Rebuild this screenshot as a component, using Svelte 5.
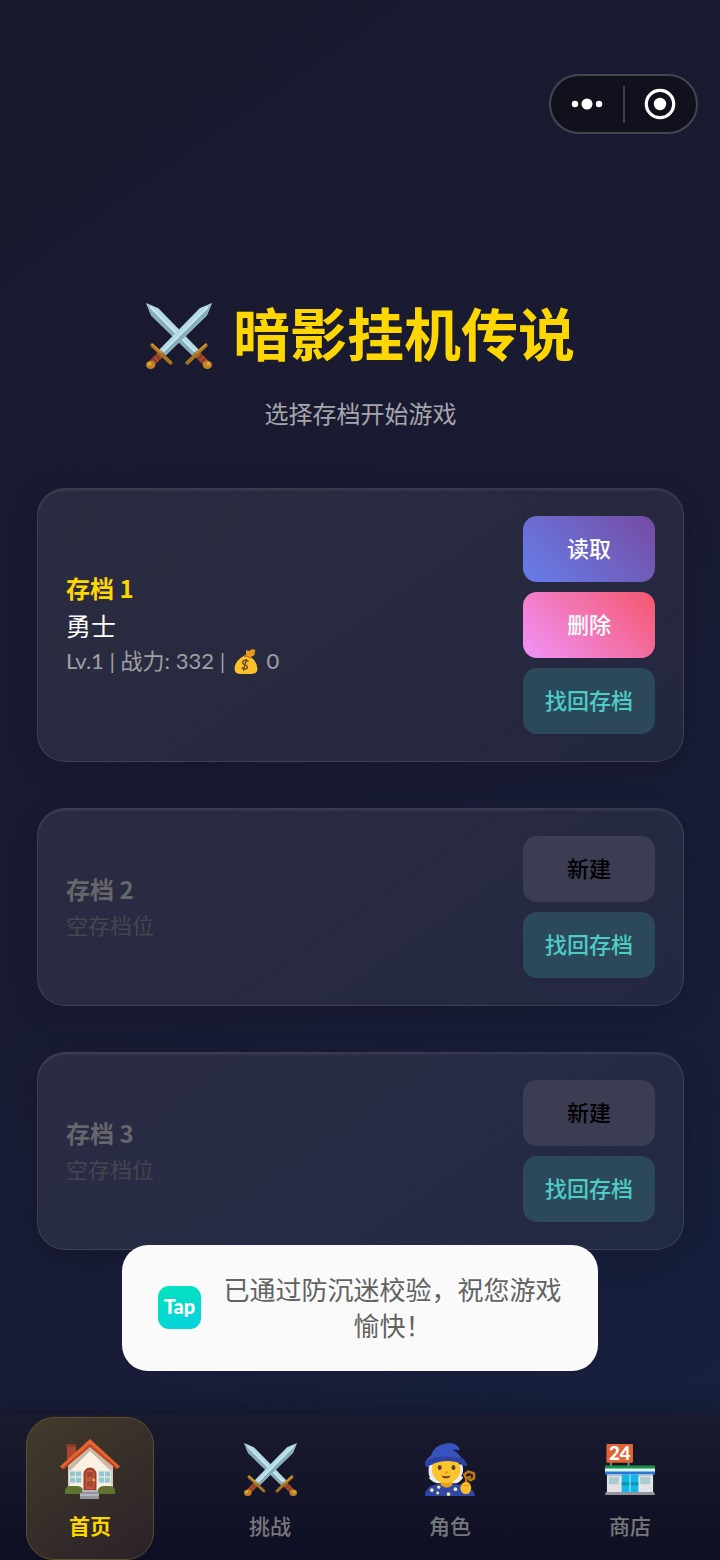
<script lang="ts">
  type Slot = { id: number; name?: string; level?: number; power?: number; gold?: number }
  type Tab = { id: string; label: string }

  const slots: Slot[] = [
    { id: 1, name: '勇士', level: 1, power: 332, gold: 0 },
    { id: 2 },
    { id: 3 },
  ]

  const tabs: Tab[] = [
    { id: 'home', label: '首页' },
    { id: 'battle', label: '挑战' },
    { id: 'role', label: '角色' },
    { id: 'shop', label: '商店' },
  ]

  let activeTab = $state('home')
</script>

{#snippet sword()}
  <path d="M64 0L52 5L13 45L19 51L59 12Z" fill="#b4dae4" />
  <path d="M64 0L16 48L19 51L59 12Z" fill="#86aebb" />
  <path d="M60 4L17 47" stroke="#cfe9f0" stroke-width="1.6" />
  <path d="M15 49L6 58" stroke="#a84a32" stroke-width="6.4" />
  <path d="M9 50l5 5M6 53l5 5" stroke="#74301f" stroke-width="1" />
  <path d="M6 41L24 58" stroke="#a8741b" stroke-width="3.6" stroke-linecap="round" />
  <path d="M6 40L15 48" stroke="#d49c2e" stroke-width="1.6" stroke-linecap="round" />
  <ellipse cx="4.500" cy="60" rx="4.500" ry="4" fill="#c18420" />
  <circle cx="3.500" cy="59" r="1.600" fill="#e8b13c" />
{/snippet}

{#snippet swords()}
  <svg viewBox="0 0 64 64" aria-hidden="true">
    <g transform="translate(64 0) scale(-1 1)">{@render sword()}</g>
    {@render sword()}
  </svg>
{/snippet}

{#snippet house()}
  <svg viewBox="0 0 60 60" aria-hidden="true">
    <path d="M7 6h9v14l-9 6z" fill="#a9472f" />
    <path d="M6 5h10v3H6z" fill="#8b3a28" />
    <path d="M30 5L53 27V54H8V27Z" fill="#f8f1e4" />
    <path d="M30 6L53 28V34L30 12L8 34V28Z" fill="#c9b8a6" />
    <path d="M8 30h2v20H8zM51 30h2v20h-2z" fill="#d9cbbb" />
    <path d="M30 0L60 27.500L57 30L30 7L3 30L0 27.500Z" fill="#e8622f" />
    <path d="M30 5L58 29L56 30L30 8L4 30L2 29Z" fill="#bd4526" />
    <g fill="#92c6d1" stroke="#e9e6dc" stroke-width="1">
      <path d="M9.500 32h6v6h-6zM15.500 32h6v6h-6zM9.500 38h6v6h-6zM15.500 38h6v6h-6z" />
      <path d="M38.500 32h6v6h-6zM44.500 32h6v6h-6zM38.500 38h6v6h-6zM44.500 38h6v6h-6z" />
    </g>
    <path d="M23.500 51V35a6.500 6.500 0 0 1 13 0V51Z" fill="#9d3c28" />
    <path d="M25.500 50V35a4.500 4.500 0 0 1 9 0V50Z" fill="#bf5b40" />
    <path d="M27 33h6v5h-6zM27 42h6v6h-6z" fill="#a5462f" />
    <circle cx="34" cy="41" r="1.300" fill="#f5b82e" />
    <path d="M5 55v-4q1-4 6-4h6q5 0 6 4v4zM38 55v-4q1-4 6-4h5q5 0 6 4v4z" fill="#60742f" />
    <path d="M22 51h16v3h1v6H20v-6h2z" fill="#9494a2" />
    <path d="M22 51h16v2H22zM20 55h19v2H20z" fill="#b5b5c1" />
  </svg>
{/snippet}

{#snippet wizard()}
  <svg viewBox="0 0 52 54" aria-hidden="true">
    <path d="M4 22q-1 10 1 13l-1 1q5 5 9 5h19q4-1 7-6l-2-1q3-5 1-12z" fill="#e9edf3" />
    <path d="M0 54q0-10 12-12h20q17 1 19 12z" fill="#3046a8" />
    <path d="M16 36h12v7q-6 5-12 0z" fill="#e59e20" />
    <ellipse cx="21.500" cy="27" rx="14.500" ry="14" fill="#fcc52e" />
    <ellipse cx="15" cy="25" rx="2" ry="2.600" fill="#593b2c" />
    <ellipse cx="29" cy="25" rx="2" ry="2.600" fill="#593b2c" />
    <ellipse cx="22" cy="30" rx="2.200" ry="1.300" fill="#ee9530" />
    <path d="M17 33q5 1.500 9 0q-1 3-4.500 3t-4.500-3" fill="#693f2d" />
    <path d="M0 21q1-5 6-8Q9 3 19 1q10-3 15 3q2 3 0 4q-3-2-6-1q6 3 9 8q6 4 6 8q-3 1-6-2q-7-4-17-4T4 24q-4 1-4-3" fill="#3853bf" />
    <path d="M3 17q16-6 36-1l4 6q-2 3-6-1q-15-6-33 2q-5 0-4-3z" fill="#2c42a3" />
    <g fill="#e8f093">
      <circle cx="7" cy="48" r="1.900" /><circle cx="14" cy="45" r="1.700" />
      <circle cx="13" cy="51" r="1.500" /><circle cx="31" cy="47" r="1.900" />
      <circle cx="24" cy="52" r="1.900" />
    </g>
    <path d="M42 45v-9l-2-4l4-3l6 2v5l-4 2l-2-3l3-1" fill="none" stroke="#bd7516" stroke-width="2.600" stroke-linejoin="round" />
    <path d="M36 46q0-4 4-6q6-1 7 5q0 7-5 7t-6-6" fill="#fdbd2b" />
    <path d="M38 43q4 1 8 0" fill="none" stroke="#e39b20" stroke-width="1" />
  </svg>
{/snippet}

{#snippet store()}
  <svg viewBox="0 0 52 54" aria-hidden="true">
    <path d="M5 19h2v5H5zM23 19h2v5h-2z" fill="#858b8f" />
    <rect x="1.500" y="1" width="27" height="19" rx="1" fill="#df6532" />
    <text x="15" y="17" text-anchor="middle" class="sign">24</text>
    <path d="M2 30h47v20H2z" fill="#e3e3e7" />
    <path d="M0 23h51v4H0z" fill="#169347" />
    <path d="M0 26h51v4H0z" fill="#dff4f7" />
    <path d="M0 29h51v3H0z" fill="#2b78d2" />
    <path d="M2 32h47v2H2z" fill="#bfc3ce" />
    <path d="M17 32h17v18H17z" fill="#16b5e8" />
    <path d="M17 40h17v3H17z" fill="#0797a4" />
    <path d="M25 32h1v18h-1z" fill="#b5effa" />
    <path d="M4 35h10v7H4zM36 35h10v7H36z" fill="#a9cbd0" />
    <path d="M1 50h49l1 3H0z" fill="#92969a" />
  </svg>
{/snippet}

{#snippet moneyBag()}
  <svg class="bag" viewBox="0 0 22 24" aria-hidden="true">
    <path d="M11 1l3 1l3-2l3 1l-1 5l-4 2l-4-2z" fill="#e69a1e" />
    <path d="M10 6q4-1 6 2q6 5 6 11q0 5-6 5H6q-6 0-6-5Q0 11 10 6" fill="#fcc02d" />
    <path d="M9 7q4-1 7 2" fill="none" stroke="#b87416" stroke-width="1.500" />
    <path d="M13.500 12q-4-2.500-5.500 0q-1 2 2 3t2 3.500q-1.500 1.500-5-.5M11.500 9.500L8.500 21" fill="none" stroke="#694b20" stroke-width="1.400" />
  </svg>
{/snippet}

<div class="page">
  <header class="top">
    <div class="capsule">
      <button type="button" aria-label="更多">
        <svg width="32" height="12" viewBox="0 0 32 12">
          <circle cx="4" cy="6" r="3.200" /><circle cx="16" cy="6" r="5.500" /><circle cx="28" cy="6" r="3.200" />
        </svg>
      </button>
      <span class="divider"></span>
      <button type="button" aria-label="关闭">
        <svg width="32" height="32" viewBox="0 0 32 32">
          <circle cx="16" cy="16" r="13.700" class="ring" /><circle cx="16" cy="16" r="6.200" />
        </svg>
      </button>
    </div>
  </header>

  <main>
    <h1>
      <span class="title-icon">{@render swords()}</span>
      <span class="title-text">暗影挂机传说</span>
    </h1>
    <p class="subtitle">选择存档开始游戏</p>

    <div class="slots">
      {#each slots as slot (slot.id)}
        <section class="slot" class:empty={!slot.name}>
          <div class="info">
            <h2>存档 {slot.id}</h2>
            {#if slot.name}
              <p class="name">{slot.name}</p>
              <p class="stats">Lv.{slot.level} | 战力: {slot.power} | {@render moneyBag()} {slot.gold}</p>
            {:else}
              <p class="blank">空存档位</p>
            {/if}
          </div>
          <div class="actions">
            {#if slot.name}
              <button type="button" class="load">读取</button>
              <button type="button" class="delete">删除</button>
            {:else}
              <button type="button" class="create">新建</button>
            {/if}
            <button type="button" class="recover">找回存档</button>
          </div>
        </section>
      {/each}
    </div>
  </main>

  <nav>
    {#each tabs as tab (tab.id)}
      <button
        type="button"
        class="tab"
        class:active={activeTab === tab.id}
        aria-current={activeTab === tab.id ? 'page' : undefined}
        onclick={() => (activeTab = tab.id)}
      >
        <span class="tab-icon">
          {#if tab.id === 'home'}
            {@render house()}
          {:else if tab.id === 'battle'}
            {@render swords()}
          {:else if tab.id === 'role'}
            {@render wizard()}
          {:else}
            {@render store()}
          {/if}
        </span>
        <span>{tab.label}</span>
      </button>
    {/each}
  </nav>

  <div class="toast" role="status">
    <span class="tap">Tap</span>
    <p>已通过防沉迷校验，祝您游戏愉快！</p>
  </div>
</div>

<style>
  :global(body) {
    margin: 0;
    background: #1a1a2e;
  }

  .page {
    display: flex;
    flex-direction: column;
    min-height: 100vh;
    color: #fff;
    font-family: 'Noto Sans CJK SC', 'Noto Sans', sans-serif;
    background: linear-gradient(145deg, #1a1a2e 0%, #191b32 40%, #181c38 70%, #16213e 100%);
  }

  h1, h2, p { margin: 0; }

  button {
    border: 0;
    padding: 0;
    font: inherit;
    cursor: pointer;
  }

  svg { display: block; }

  .top {
    display: flex;
    justify-content: flex-end;
    padding: 74px 22px 0;
  }

  .capsule {
    display: flex;
    align-items: center;
    box-sizing: border-box;
    width: 149px;
    height: 60px;
    border: 2px solid #45454f;
    border-radius: 30px;
    background: #10111d;
  }

  .capsule button {
    flex: 1;
    display: flex;
    justify-content: center;
    align-items: center;
    height: 100%;
    background: none;
  }

  .capsule svg { fill: #fff; }

  .capsule .ring {
    fill: none;
    stroke: #fff;
    stroke-width: 3.2;
  }

  .divider {
    width: 2px;
    height: 37px;
    background: #3f404a;
  }

  main {
    flex: 1;
    padding: 160px 36px 164px 37px;
  }

  h1 {
    display: flex;
    justify-content: center;
    align-items: center;
    gap: 21px;
    color: #ffd700;
    font-size: 57px;
    font-weight: 700;
    line-height: 74px;
  }

  .title-icon { width: 66px; }
  .title-text { padding-bottom: 10px; }

  .subtitle {
    margin-top: 17px;
    color: #a6a6ac;
    font-size: 24px;
    line-height: 36px;
    text-align: center;
  }

  .slots {
    display: flex;
    flex-direction: column;
    gap: 46px;
    margin-top: 57px;
  }

  .slot {
    display: flex;
    justify-content: space-between;
    align-items: center;
    padding: 27px 28px;
    border: 1px solid rgba(255, 255, 255, 0.1);
    border-radius: 28px;
    background: linear-gradient(145deg, rgba(255, 255, 255, 0.08), rgba(255, 255, 255, 0.05));
    box-shadow: 0 8px 32px rgba(0, 0, 0, 0.15), inset 0 2px 0 rgba(255, 255, 255, 0.05);
  }

  .info { padding-bottom: 2px; }

  h2 {
    color: #ffd700;
    font-size: 24px;
    font-weight: 700;
    line-height: 36px;
  }

  .name {
    font-size: 25px;
    line-height: 38px;
  }

  .stats {
    color: #a0a0a6;
    font-family: Lato, 'Noto Sans CJK SC', sans-serif;
    font-size: 22px;
    line-height: 34px;
    white-space: pre;
  }

  .bag {
    display: inline-block;
    width: 24px;
    height: 25px;
    margin: 0 3px;
    vertical-align: -5px;
  }

  .empty h2 { color: #66666b; }

  .blank {
    color: #45464f;
    font-size: 22px;
    line-height: 34px;
  }

  .actions {
    display: flex;
    flex-direction: column;
    gap: 10px;
    width: 132px;
  }

  .actions button {
    height: 66px;
    padding-bottom: 4px;
    border-radius: 14px;
    color: #fff;
    font-size: 22px;
    font-weight: 500;
  }

  .actions .load { background: linear-gradient(45deg, #667eea, #764ba2); }
  .actions .delete { background: linear-gradient(45deg, #f093fb, #f5576c); }
  .actions .create { background: #3b3d53; color: #000; }
  .actions .recover { background: #2b495b; color: #4ecdc4; }

  nav {
    display: flex;
    justify-content: space-around;
    border-top: 2px solid #1d1c30;
    background: linear-gradient(#1a1a2f, #0f0f23);
    box-shadow: 0 -6px 20px rgba(0, 0, 0, 0.2);
  }

  .tab {
    display: flex;
    flex-direction: column;
    align-items: center;
    gap: 8px;
    box-sizing: border-box;
    width: 128px;
    height: 143px;
    padding: 19px 0 17px;
    border: 1px solid transparent;
    border-radius: 28px;
    background: none;
    color: #77777e;
    font-size: 21px;
    font-weight: 500;
    line-height: 32px;
  }

  .tab-icon {
    display: flex;
    justify-content: center;
    align-items: center;
    height: 64px;
  }

  .tab-icon :global(svg) { width: 53px; height: 53px; }

  .tab.active {
    border-color: #5c5028;
    background: linear-gradient(145deg, #433b2b, #2a2228);
    color: #ffd700;
    font-weight: 700;
  }

  .active .tab-icon :global(svg) { width: 60px; height: 60px; }

  .sign {
    fill: #fff;
    font-family: Lato, sans-serif;
    font-size: 19px;
    font-weight: 900;
  }

  .toast {
    position: fixed;
    left: 50%;
    bottom: 189px;
    transform: translateX(-50%);
    display: flex;
    align-items: center;
    gap: 22px;
    box-sizing: border-box;
    width: 476px;
    max-width: 90%;
    padding: 26px 36px 28px;
    border-radius: 26px;
    background: #fafafa;
  }

  .toast p {
    flex: 1;
    color: #626262;
    font-size: 26px;
    line-height: 36px;
    text-align: center;
  }

  .tap {
    display: flex;
    flex: none;
    justify-content: center;
    width: 43px;
    height: 43px;
    border-radius: 11px;
    background: linear-gradient(160deg, #04e5bb, #06cfe0);
    font-family: Lato, sans-serif;
    font-size: 20px;
    font-weight: 900;
    line-height: 40px;
  }
</style>
